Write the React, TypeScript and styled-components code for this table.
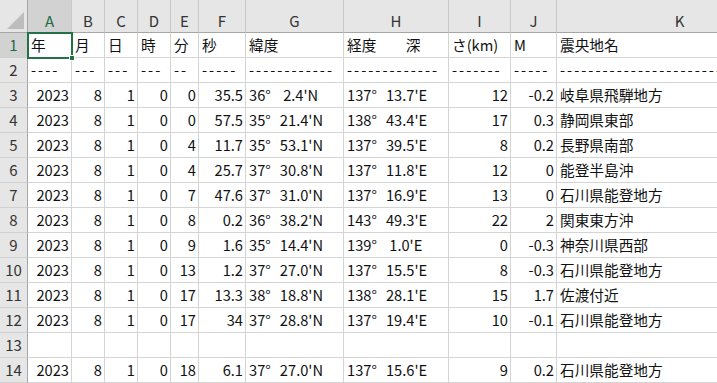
import styled, { createGlobalStyle } from 'styled-components';

const GlobalStyle = createGlobalStyle`
  html, body {
    margin: 0;
    padding: 0;
    background: #fff;
    overflow: hidden;
  }
  body {
    font-family: "Noto Sans CJK JP", "Noto Sans", sans-serif;
  }
`;

const colWidths = [28, 44, 33, 33, 33, 28, 47, 98, 105, 62, 46, 246];
const letters = ['A', 'B', 'C', 'D', 'E', 'F', 'G', 'H', 'I', 'J', 'K'];

const Sheet = styled.div`
  display: grid;
  grid-template-columns: ${colWidths.map((w) => `${w}px`).join(' ')};
  grid-template-rows: 33px repeat(14, 25px);
  width: max-content;
  font-size: 14.67px;
  line-height: 18px;
  color: #111;
`;

const Corner = styled.div`
  position: relative;
  background: #e6e6e6;
  border-right: 1px solid #a6a6a6;
  border-bottom: 1px solid #a6a6a6;
  box-sizing: border-box;

  svg {
    position: absolute;
    right: 3px;
    bottom: 3px;
  }
`;

const ColHead = styled.div<{ $selected?: boolean }>`
  display: flex;
  align-items: center;
  justify-content: center;
  padding-top: 9px;
  box-sizing: border-box;
  background: ${(p) => (p.$selected ? '#d2d2d2' : '#e6e6e6')};
  color: ${(p) => (p.$selected ? '#1d6b40' : '#333')};
  border-right: 1px solid #c9c9c9;
  border-bottom: 1px solid #a6a6a6;
  font-size: 15px;
`;

const RowHead = styled.div<{ $selected?: boolean }>`
  display: flex;
  align-items: center;
  justify-content: center;
  box-sizing: border-box;
  background: ${(p) => (p.$selected ? '#d2d2d2' : '#e6e6e6')};
  color: ${(p) => (p.$selected ? '#1d6b40' : '#333')};
  border-right: 1px solid #a6a6a6;
  border-bottom: 1px solid #d0d0d0;
  font-size: 15px;
`;

const Cell = styled.div<{ $align?: 'left' | 'right' }>`
  position: relative;
  display: flex;
  align-items: center;
  justify-content: ${(p) => (p.$align === 'right' ? 'flex-end' : 'flex-start')};
  padding: 0 ${(p) => (p.$align === 'right' ? '2px' : '4px')} 0 ${(p) => (p.$align === 'right' ? '2px' : '3px')};
  box-sizing: border-box;
  border-right: 1px solid #d4d4d4;
  border-bottom: 1px solid #d4d4d4;
  white-space: pre;
  overflow: hidden;
`;

const Selection = styled.div`
  position: absolute;
  left: -1px;
  top: -1px;
  width: 46px;
  height: 27px;
  border: 2px solid #217346;
  box-sizing: border-box;
  pointer-events: none;
  z-index: 2;
`;

const FillHandle = styled.div`
  position: absolute;
  right: -4px;
  bottom: -4px;
  width: 6px;
  height: 6px;
  background: #217346;
  border: 1px solid #fff;
  box-sizing: border-box;
`;

const SelectedCell = styled(Cell)`
  overflow: visible;
`;

const Deg = styled.span<{ $digits: number }>`
  display: inline-block;
  width: ${(p) => p.$digits * 8.1 + 14.67}px;
`;

const Dashes = styled.span`
  letter-spacing: 2px;
`;

type Row = [number, number, number, number, number, string, [string, string], [string, string], string, string, string];

const rows: (Row | null)[] = [
  [2023, 8, 1, 0, 0, '35.5', ['36', " 2.4'N"], ['137', "13.7'E"], '12', '-0.2', '岐阜県飛騨地方'],
  [2023, 8, 1, 0, 0, '57.5', ['35', "21.4'N"], ['138', "43.4'E"], '17', '0.3', '静岡県東部'],
  [2023, 8, 1, 0, 4, '11.7', ['35', "53.1'N"], ['137', "39.5'E"], '8', '0.2', '長野県南部'],
  [2023, 8, 1, 0, 4, '25.7', ['37', "30.8'N"], ['137', "11.8'E"], '12', '0', '能登半島沖'],
  [2023, 8, 1, 0, 7, '47.6', ['37', "31.0'N"], ['137', "16.9'E"], '13', '0', '石川県能登地方'],
  [2023, 8, 1, 0, 8, '0.2', ['36', "38.2'N"], ['143', "49.3'E"], '22', '2', '関東東方沖'],
  [2023, 8, 1, 0, 9, '1.6', ['35', "14.4'N"], ['139', " 1.0'E"], '0', '-0.3', '神奈川県西部'],
  [2023, 8, 1, 0, 13, '1.2', ['37', "27.0'N"], ['137', "15.5'E"], '8', '-0.3', '石川県能登地方'],
  [2023, 8, 1, 0, 17, '13.3', ['38', "18.8'N"], ['138', "28.1'E"], '15', '1.7', '佐渡付近'],
  [2023, 8, 1, 0, 17, '34', ['37', "28.8'N"], ['137', "19.4'E"], '10', '-0.1', '石川県能登地方'],
  null,
  [2023, 8, 1, 0, 18, '6.1', ['37', "27.0'N"], ['137', "15.6'E"], '9', '0.2', '石川県能登地方'],
];

const dashCounts = [4, 3, 3, 3, 2, 5, 12, 13, 7, 5, 40];

const Coord = ({ deg, min }: { deg: string; min: string }) => (
  <>
    <Deg $digits={deg.length}>{deg}°</Deg>
    {min}
  </>
);

const App = () => {
  return (
    <>
      <GlobalStyle />
      <Sheet>
        <Corner>
          <svg width="17" height="17" viewBox="0 0 17 17">
            <polygon points="17,0 17,17 0,17" fill="#bdbdbd" />
          </svg>
        </Corner>
        {letters.map((l, i) => (
          <ColHead key={l} $selected={i === 0}>
            {l}
          </ColHead>
        ))}

        {/* row 1: headings */}
        <RowHead $selected>1</RowHead>
        <SelectedCell>
          年
          <Selection>
            <FillHandle />
          </Selection>
        </SelectedCell>
        <Cell>月</Cell>
        <Cell>日</Cell>
        <Cell>時</Cell>
        <Cell>分</Cell>
        <Cell>秒</Cell>
        <Cell>緯度</Cell>
        <Cell>経度　　深</Cell>
        <Cell>さ(km)</Cell>
        <Cell>M</Cell>
        <Cell>震央地名</Cell>

        {/* row 2: dashes */}
        <RowHead>2</RowHead>
        {dashCounts.map((n, i) => (
          <Cell key={i}>
            <Dashes>{'-'.repeat(n)}</Dashes>
          </Cell>
        ))}

        {rows.map((r, idx) => {
          const num = idx + 3;
          if (!r) {
            return [
              <RowHead key={`h${num}`}>{num}</RowHead>,
              ...letters.map((l) => <Cell key={`${l}${num}`} />),
            ];
          }
          return [
            <RowHead key={`h${num}`}>{num}</RowHead>,
            ...r.slice(0, 6).map((v, i) => (
              <Cell key={`${letters[i]}${num}`} $align="right">
                {v as string | number}
              </Cell>
            )),
            <Cell key={`G${num}`}>
              <Coord deg={r[6][0]} min={r[6][1]} />
            </Cell>,
            <Cell key={`H${num}`}>
              <Coord deg={r[7][0]} min={r[7][1]} />
            </Cell>,
            <Cell key={`I${num}`} $align="right">
              {r[8]}
            </Cell>,
            <Cell key={`J${num}`} $align="right">
              {r[9]}
            </Cell>,
            <Cell key={`K${num}`}>{r[10]}</Cell>,
          ];
        })}
      </Sheet>
    </>
  );
};

export default App;
